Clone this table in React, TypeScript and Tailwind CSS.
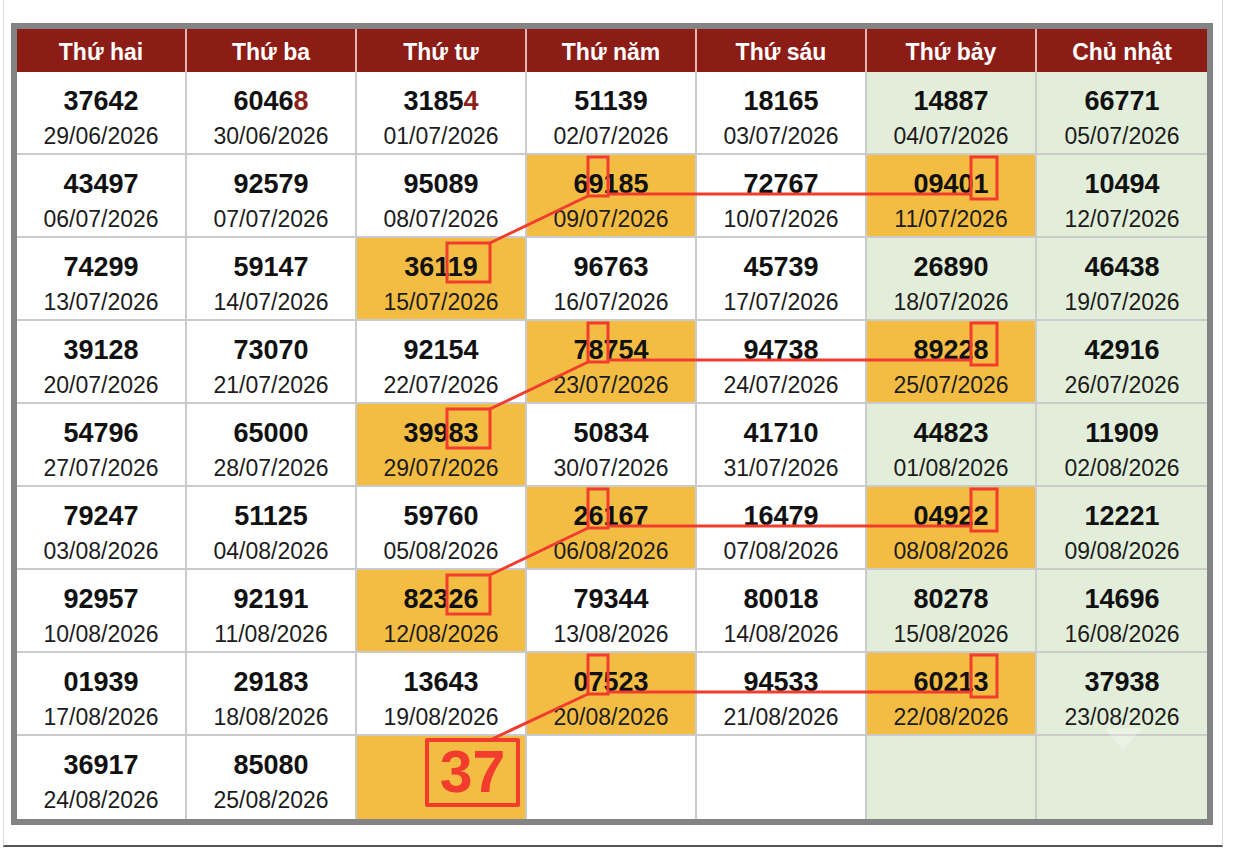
import React from 'react';

type Cell = { n?: string; d?: string; hl?: boolean; redLast?: boolean; big?: string };

const DAYS = ['Thứ hai', 'Thứ ba', 'Thứ tư', 'Thứ năm', 'Thứ sáu', 'Thứ bảy', 'Chủ nhật'];

const raw: string[][] = [
  ['37642 29/06', '60468 30/06', '31854 01/07', '51139 02/07', '18165 03/07', '14887 04/07', '66771 05/07'],
  ['43497 06/07', '92579 07/07', '95089 08/07', '69185 09/07', '72767 10/07', '09401 11/07', '10494 12/07'],
  ['74299 13/07', '59147 14/07', '36119 15/07', '96763 16/07', '45739 17/07', '26890 18/07', '46438 19/07'],
  ['39128 20/07', '73070 21/07', '92154 22/07', '78754 23/07', '94738 24/07', '89228 25/07', '42916 26/07'],
  ['54796 27/07', '65000 28/07', '39983 29/07', '50834 30/07', '41710 31/07', '44823 01/08', '11909 02/08'],
  ['79247 03/08', '51125 04/08', '59760 05/08', '26167 06/08', '16479 07/08', '04922 08/08', '12221 09/08'],
  ['92957 10/08', '92191 11/08', '82326 12/08', '79344 13/08', '80018 14/08', '80278 15/08', '14696 16/08'],
  ['01939 17/08', '29183 18/08', '13643 19/08', '07523 20/08', '94533 21/08', '60213 22/08', '37938 23/08'],
  ['36917 24/08', '85080 25/08', '', '', '', '', ''],
];

// highlighted cells: row -> columns
const HL: Record<number, number[]> = { 1: [3, 5], 2: [2], 3: [3, 5], 4: [2], 5: [3, 5], 6: [2], 7: [3, 5], 8: [2] };

const rows: Cell[][] = raw.map((r, ri) =>
  r.map((s, ci) => {
    const hl = (HL[ri] || []).includes(ci);
    if (!s) return { hl, big: ri === 8 && ci === 2 ? '37' : undefined };
    const [n, dm] = s.split(' ');
    return { n, d: `${dm}/2026`, hl, redLast: ri === 0 && (ci === 1 || ci === 2) };
  })
);

const RED = '#f23d2e';
const top = (i: number) => 72 + 83 * i;

const Overlay = () => {
  const pairs = [1, 3, 5, 7];
  return (
    <svg className="absolute left-0 top-0 pointer-events-none" width={1242} height={848}>
      {pairs.map((a) => {
        const rt = top(a);
        const rb = rt + 83;
        const last = a === 7;
        return (
          <g key={a} fill="none" stroke={RED} strokeWidth={3}>
            <rect x={588} y={rt + 2} width={20} height={39} />
            <rect x={971} y={rt + 2} width={26} height={42} />
            <line x1={608} y1={rt + 39} x2={971} y2={rt + 39} />
            {!last && <rect x={447} y={rb + 5} width={43} height={39} />}
            <line x1={last ? 492 : 490} y1={last ? rb + 3 : rb + 5} x2={588} y2={rt + 41} />
          </g>
        );
      })}
      <polygon points="1104,728 1142,728 1123,750" fill="white" opacity={0.3} />
    </svg>
  );
};

const CellView = ({ c, ri, ci }: { c: Cell; ri: number; ci: number }) => {
  const weekend = ci >= 5;
  const bg = c.hl ? 'bg-[#f3bd43]' : weekend ? 'bg-[#e2eed9]' : 'bg-white';
  const br = ci < 6 ? 'border-r-2' : '';
  const bb = ri < 8 ? 'border-b-2' : '';
  return (
    <div className={`h-[83px] ${bg} ${br} ${bb} border-[#cbcbcb] flex flex-col items-center pt-[14px]`}>
      {c.n && (
        <>
          <div className="text-[27px] leading-[30px] font-bold text-[#111]">
            {c.redLast ? (
              <>
                {c.n.slice(0, 4)}
                <span className="text-[#8e1f1a]">{c.n.slice(4)}</span>
              </>
            ) : (
              c.n
            )}
          </div>
          <div className="mt-[6px] text-[23px] leading-[28px] text-[#1c1c1c]">{c.d}</div>
        </>
      )}
      {c.big && (
        <div className="w-full flex justify-end pr-[5px] -mt-[12px]">
          <div className="w-[95px] h-[69px] border-4 border-[#f23d2e] rounded-[2px] flex items-center justify-center text-[59px] leading-none font-bold text-[#f23d2e]">
            {c.big}
          </div>
        </div>
      )}
    </div>
  );
};

export default function App() {
  return (
    <div className="relative w-[1242px] h-[848px] bg-white overflow-hidden" style={{ fontFamily: '"Liberation Sans", Arial, sans-serif' }}>
      <div className="ml-[3px] w-[1220px] h-[847px] border-l border-r border-b-2 border-l-[#dcdcdc] border-r-[#dcdcdc] border-b-[#555] pl-[7px] pt-[23px]">
        <div className="w-[1202px] border-[6px] border-[#838383]">
          <div className="grid grid-cols-7">
            {DAYS.map((d, i) => (
              <div
                key={d}
                className={`h-[43px] pt-[3px] bg-[#8c1c16] flex items-center justify-center text-white font-bold text-[23px] ${i < 6 ? 'border-r-2 border-[#e3b5b2]' : ''}`}
              >
                {d}
              </div>
            ))}
            {rows.map((r, ri) => r.map((c, ci) => <CellView key={`${ri}-${ci}`} c={c} ri={ri} ci={ci} />))}
          </div>
        </div>
      </div>
      <Overlay />
    </div>
  );
}
